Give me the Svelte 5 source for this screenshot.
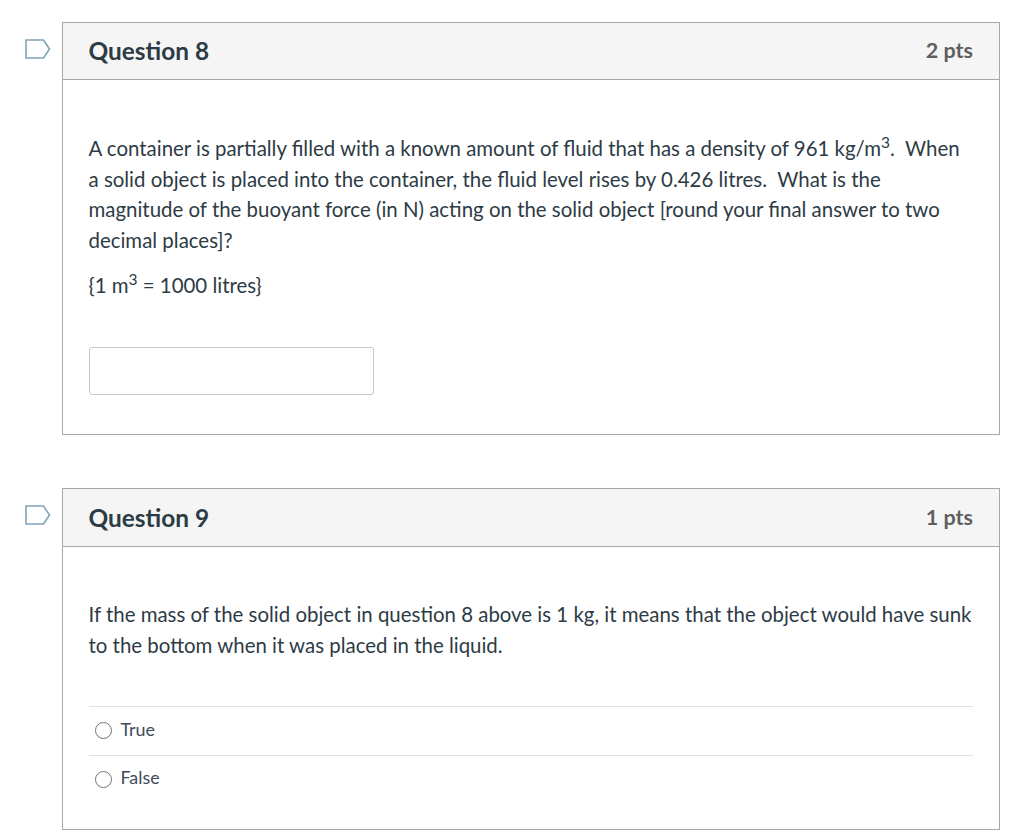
<script>
  const answers = ['True', 'False'];
</script>

{#snippet flag()}
  <svg class="flag" width="26" height="20" viewBox="0 0 26 20" aria-hidden="true">
    <path d="M1 1 H18.5 L24.5 10 L18.5 19 H1 Z" fill="#fff" stroke="#7fa3b8" stroke-width="1.6" />
  </svg>
{/snippet}

<main class="page">
  <section class="question">
    {@render flag()}
    <div class="card">
      <header class="head">
        <h2>Question 8</h2>
        <span class="pts">2 pts</span>
      </header>
      <div class="body body-8">
        <p>A container is partially filled with a known amount of fluid that has a density of 961 kg/m<sup>3</sup>.&nbsp; When a solid object is placed into the container, the fluid level rises by 0.426 litres.&nbsp; What is the magnitude of the buoyant force (in N) acting on the solid object [round your final answer to two decimal places]?</p>
        <p class="note">{'{'}1 m<sup>3</sup> = 1000 litres{'}'}</p>
        <input class="answer" type="text" aria-label="Answer" />
      </div>
    </div>
  </section>

  <section class="question">
    {@render flag()}
    <div class="card">
      <header class="head">
        <h2>Question 9</h2>
        <span class="pts">1 pts</span>
      </header>
      <div class="body body-9">
        <p>If the mass of the solid object in question 8 above is 1 kg, it means that the object would have sunk to the bottom when it was placed in the liquid.</p>
        <ul class="options">
          {#each answers as answer}
            <li>
              <label>
                <span class="radio"></span>
                {answer}
              </label>
            </li>
          {/each}
        </ul>
      </div>
    </div>
  </section>
</main>

<style>
  :global(body) {
    margin: 0;
    background: #fff;
  }

  .page {
    box-sizing: border-box;
    height: 837px;
    padding: 21.7px 24px 0 25px;
    display: flex;
    flex-direction: column;
    gap: 53.3px;
    font-family: Lato, "Liberation Sans", sans-serif;
    color: #2d3b45;
    overflow: hidden;
  }

  .question {
    display: flex;
    align-items: flex-start;
  }

  .flag {
    flex: none;
    margin-top: 17px;
    margin-right: 11px;
  }

  .card {
    flex: 1;
    box-sizing: border-box;
    border: 1px solid #a8a8a8;
    border-bottom-width: 1.5px;
  }

  .head {
    box-sizing: border-box;
    height: 57.5px;
    display: flex;
    align-items: center;
    justify-content: space-between;
    padding: 0 26px 0.5px 25.5px;
    background: #f5f5f5;
    border-bottom: 1px solid #a8a8a8;
  }

  h2 {
    margin: 0;
    font-size: 24.4px;
    font-weight: 700;
    color: #2d3b45;
  }

  .pts {
    margin-bottom: 1px;
    font-size: 21.5px;
    font-weight: 700;
    color: #5f5f5f;
  }

  .body {
    box-sizing: border-box;
    padding: 0 26px 0 25.5px;
    font-size: 20.43px;
    line-height: 30.7px;
  }

  .body-8 {
    height: 353.8px;
    padding-top: 52.7px;
  }

  .body-9 {
    height: 282px;
    padding-top: 52.3px;
  }

  p {
    margin: 0;
    max-width: 884px;
  }

  sup {
    font-size: 15.5px;
    line-height: 0;
  }

  .note {
    margin-top: 14.3px;
  }

  .answer {
    display: block;
    box-sizing: border-box;
    width: 285.5px;
    height: 48px;
    margin-top: 46.5px;
    background: #fff;
    border: 1px solid #c8c8c8;
    border-radius: 3px;
  }

  .options {
    list-style: none;
    margin: 46px 0 0;
    padding: 0;
  }

  .options li {
    box-sizing: border-box;
    height: 48.2px;
    border-top: 1px solid #e2e2e2;
  }

  label {
    display: flex;
    align-items: center;
    gap: 9px;
    height: 43px;
    padding-left: 6px;
    font-size: 17.9px;
    color: #3d4c58;
  }

  .radio {
    box-sizing: border-box;
    width: 17px;
    height: 17px;
    margin-top: 4px;
    border: 1.5px solid #737373;
    border-radius: 50%;
    background: #fff;
  }
</style>
